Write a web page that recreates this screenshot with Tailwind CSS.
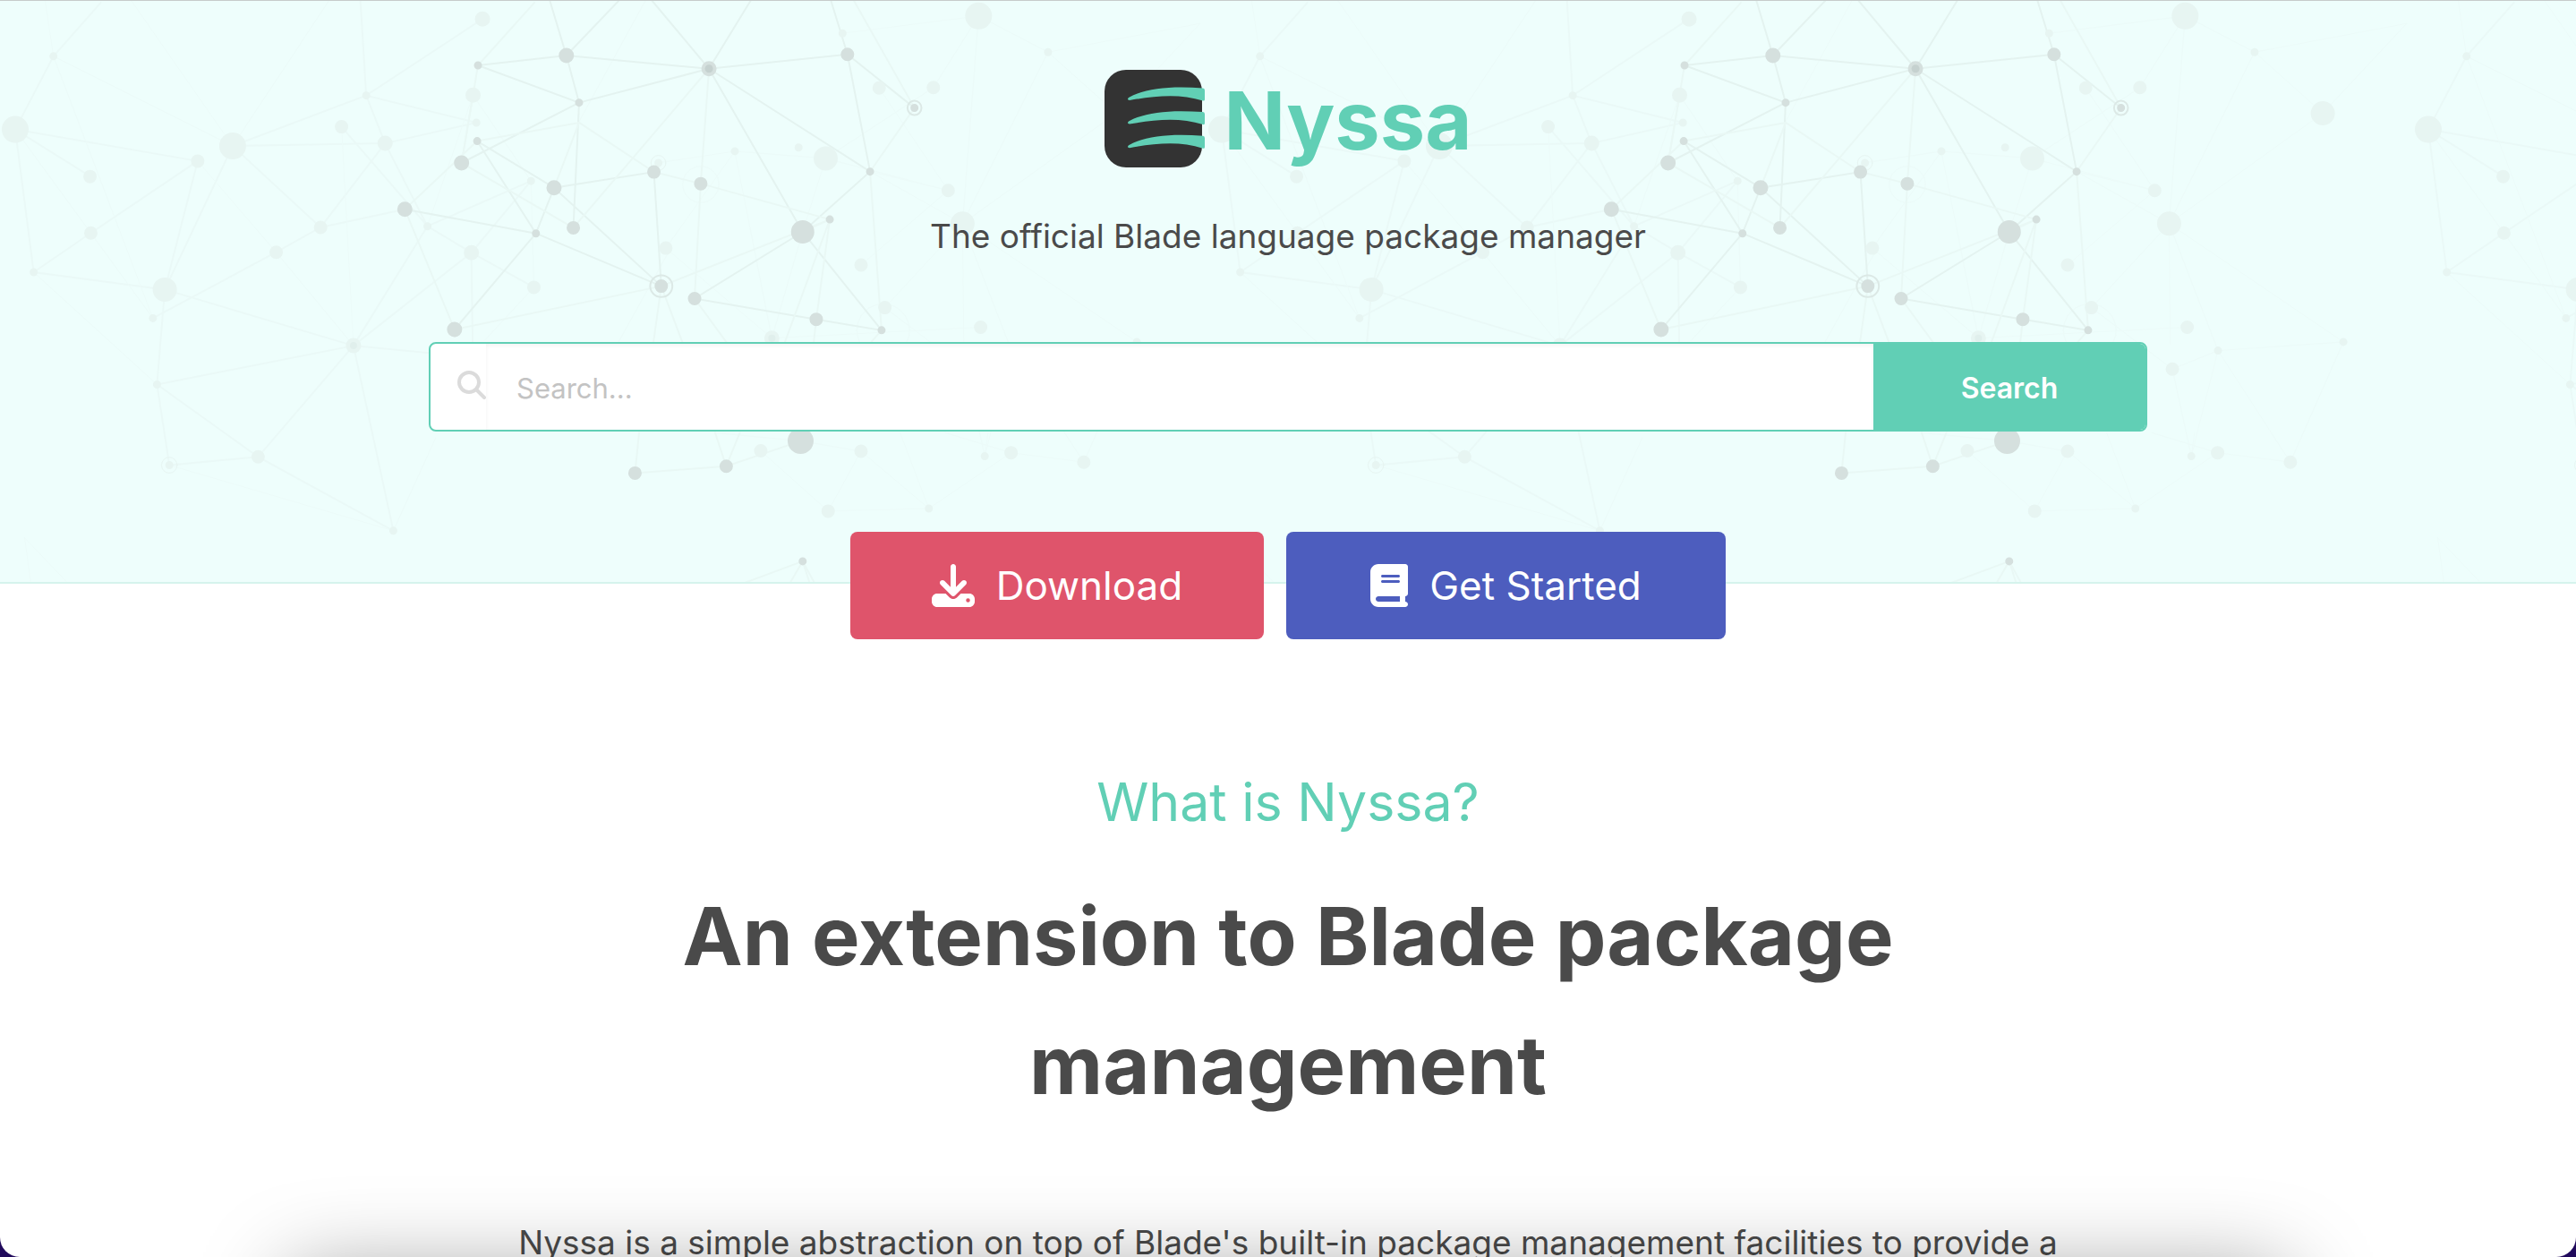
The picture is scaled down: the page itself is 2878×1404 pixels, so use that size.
<!DOCTYPE html>
<html lang="en">
<head>
<meta charset="utf-8">
<meta name="viewport" content="width=device-width, initial-scale=1">
<title>Nyssa - The official Blade language package manager</title>
<script src="https://cdn.jsdelivr.net/npm/@tailwindcss/browser@4"></script>
</head>
<body class="bg-white font-[Inter,sans-serif] text-[#4a4a4a]">
<div class="relative h-screen overflow-hidden">
  <header class="relative border-t border-b-2 border-t-[#c6cccb] border-b-[#d5f3ed] bg-[#eefefc]">
    <svg class="absolute inset-0 size-full" aria-hidden="true">
      <defs>
        <g id="net" transform="scale(.45918 .4209)" fill="none" stroke-linecap="round">
          <!-- faint links -->
          <g stroke="#eaf9f7" stroke-width="2">
            <path vector-effect="non-scaling-stroke" d="M245 5L130 147L37 341L220 466M37 341L481 425M37 341L82 720L401 766L860 915M82 720L221 616L481 425L401 766L382 1018L860 915M566 385L891 251L1174 48M566 385L937 378L1159 323L891 251L877 0M891 251L937 378L780 601L566 385L401 766M937 378L1040 598L1147 668L1299 760M831 334L1040 598L860 915L1147 668L1292 478L1040 598M860 915L628 1210L382 1018L412 1232L628 1210L957 1406L860 915L1100 940M1151 250L1123 430M672 667L780 601L985 553M672 667L372 842M1147 668L1150 905"/>
          </g>
          <g stroke="#ecfbf9" stroke-width="1">
            <path vector-effect="non-scaling-stroke" d="M110 0L130 147L372 842L221 616L37 341M130 147L566 385L800 0M320 0L566 385M82 720L382 1018M831 334L860 915L672 667L481 425M412 1232L957 1406L1060 1160M60 1425L165 1545M60 1425L75 1545M1151 250L1292 478L1299 760L1180 900M1040 598L1151 250M1409 320L1570 0M1505 905L1630 660M2050 86L2381 40L2550 136L2716 298L2920 60L2550 136L2342 591L2716 298M2381 40L2271 230L2009 418M2381 40L2342 591L2153 814L2350 977L2461 928L2342 591L2766 905L2461 928L2637 1224L2766 905M2350 977L2396 1208L2461 928M2139 231L2307 503L2117 453L2342 591M1788 399L2009 418L2307 503M1788 399L1620 656L1878 895L1788 399L1600 430M2009 418L1953 613L1878 895L2386 866M2095 701L2307 503M1851 1194L2015 1354L2095 1195L2260 1347L2015 1354M2095 1195L1948 1168L1740 1146M2260 1347L2460 1199L2300 1146M2260 1347L2190 1146M2396 1208L2404 1146M2460 1199L2637 1224L2590 1146M2342 591L2345 910"/>
            <ellipse vector-effect="non-scaling-stroke" cx="1705" cy="487" rx="44" ry="48"/>
            <ellipse vector-effect="non-scaling-stroke" cx="2149" cy="874" rx="64" ry="70"/>
          </g>
          <!-- strong links -->
          <g stroke="#e4f3f0" stroke-width="2">
            <path vector-effect="non-scaling-stroke" d="M1338 0L1378 145L1505 0M1163 171L1378 145L1725 180L2062 142L2225 284M1163 171L1409 270L1378 145M1409 270L1725 180L1587 0M1409 270L1123 430M1409 270L1395 602M1161 372L1348 496L1304 617L1161 372M985 553L1304 617L1609 757L1348 496L1591 454L1609 757M1304 617L1106 872M1725 180L1826 0M1725 180L1953 613L2117 453L1725 180M2117 453L2062 142L2022 0M1953 613L2145 874L1986 845L1690 790L1953 613"/>
          </g>
          <g stroke="#e9f8f5" stroke-width="2">
            <path vector-effect="non-scaling-stroke" d="M1163 171L1300 5M1161 372L985 553L1106 872M1163 171L1123 430L1395 602L1725 180L1705 485L1690 790L1767 905M1161 372L1409 323L1348 496M1409 323L1591 454L1705 485L2019 580L1609 757L1106 872M2078 0L2225 284L2117 453L2145 874L2120 905M2019 580L1953 613M2019 580L1986 845L1980 905M2019 580L1910 905M1609 757L1590 905M1609 757L1660 905M1545 1253L1767 1235L1948 1168M1555 1146L1545 1253M1740 1146L1767 1235L1800 1146M1953 1487L1810 1545M1953 1487L1922 1545M1953 1487L1970 1545M1953 1487L1982 1545"/>
          </g>
          <!-- faint nodes, grouped by size -->
          <g stroke="#e7f5f2">
            <path vector-effect="non-scaling-stroke" stroke-width="30" d="M37 341h0M566 385h0M2381 40h0"/>
            <path vector-effect="non-scaling-stroke" stroke-width="27" d="M401 766h0M2009 418h0M2342 591h0M2716 298h0"/>
            <path vector-effect="non-scaling-stroke" stroke-width="17" d="M1174 48h0M1151 250h0M937 378h0M1147 668h0M860 915h0M1878 895h0"/>
            <path vector-effect="non-scaling-stroke" stroke-width="15" d="M219 466h0M481 425h0M221 616h0M780 601h0M672 667h0M831 334h0M628 1210h0M1299 760h0M2271 230h0M2139 231h0M2307 503h0M1620 656h0M2095 701h0M2153 814h0M2386 866h0M1851 1194h0M2095 1195h0M2460 1199h0M2637 1224h0M2015 1354h0M2350 977h0"/>
            <path vector-effect="non-scaling-stroke" stroke-width="9" d="M130 147h0M891 251h0M1159 323h0M1292 478h0M1040 598h0M82 720h0M372 842h0M382 1018h0M957 1406h0M2050 86h0M2550 136h0M1788 399h0M1943 389h0M2396 1208h0M2260 1347h0M2766 905h0M2461 928h0M412 1232h0M1602 430h0"/>
            <ellipse vector-effect="non-scaling-stroke" cx="412" cy="1232" rx="19" ry="21"/>
            <ellipse vector-effect="non-scaling-stroke" cx="1602" cy="430" rx="18" ry="20"/>
            <path vector-effect="non-scaling-stroke" stroke="#e0efec" stroke-width="8" d="M860 915h0M1878 895h0"/>
          </g>
          <!-- strong nodes -->
          <g stroke="#d5e0de">
            <path vector-effect="non-scaling-stroke" stroke-width="29" d="M1948 1168h0"/>
            <path vector-effect="non-scaling-stroke" stroke-width="26" d="M1953 613h0"/>
            <path vector-effect="non-scaling-stroke" stroke-width="17" d="M1378 145h0M1123 430h0M985 553h0M1348 496h0M1106 872h0M1725 180h0"/>
            <path vector-effect="non-scaling-stroke" stroke-width="15" d="M1395 602h0M1545 1253h0M2062 142h0M1591 454h0M1705 485h0M1609 757h0M1690 790h0M1986 845h0M1767 1235h0"/>
            <path vector-effect="non-scaling-stroke" stroke-width="9" d="M1163 171h0M1409 270h0M1161 372h0M1304 617h0M2117 453h0M2019 580h0M2145 874h0M1953 1487h0M2225 284h0"/>
            <ellipse vector-effect="non-scaling-stroke" stroke="#dce9e6" stroke-width="2" cx="2225" cy="284" rx="17" ry="19"/>
            <ellipse vector-effect="non-scaling-stroke" stroke="#dce9e6" stroke-width="2" cx="1609" cy="757" rx="27" ry="29"/>
            <path vector-effect="non-scaling-stroke" stroke="#c5d1cf" stroke-width="9" d="M1725 180h0"/>
          </g>
        </g>
      </defs>
      <use href="#net"/>
      <use href="#net" x="1348"/>
      <use href="#net" x="2696"/>
    </svg>

    <div class="relative mx-auto flex w-full max-w-[1920px] flex-col items-center pt-[75px]">
      <a href="#" class="flex items-center gap-5 text-[90px] leading-[110px] font-bold text-[#61cfb5]">
        <svg class="h-[110px] w-[114px]" viewBox="0 0 114 110" aria-hidden="true">
          <rect width="109" height="109" rx="24" fill="#333"/>
          <g fill="#61cfb5">
            <path id="blade" d="M27 31C46 20 76 18 110 20.500Q112 20.600 112 23V33Q112 35 110 34.500C84 26 56 29 28 34Q24.500 33.500 27 31Z"/>
            <use href="#blade" y="26.600"/>
            <use href="#blade" y="53.200"/>
          </g>
        </svg>
        <span class="pt-1">Nyssa</span>
      </a>
      <p class="mt-11 text-[37px] leading-[60px]">The official Blade language package manager</p>

      <form class="mt-[88px] flex h-[100px] w-full overflow-hidden rounded-lg border-2 border-[#61cfb5] bg-white" onsubmit="return false">
        <label for="q" aria-label="Search packages" class="flex items-center pb-1 pl-[30px] text-[#dbdbdb]">
          <svg class="size-8" viewBox="0 0 32 32" fill="none" stroke="currentColor" stroke-width="4" aria-hidden="true"><circle cx="13" cy="13" r="11"/><path d="M21 21l9 9" stroke-linecap="round"/></svg>
        </label>
        <input id="q" type="text" placeholder="Search..." class="min-w-0 flex-1 pt-1 pl-[34px] text-[31px] shadow-[inset_0_2px_4px_rgba(10,10,10,0.05)] outline-none placeholder:text-[#c3c3c3]">
        <button type="submit" class="w-[304px] bg-[#61cfb5] pt-1 text-[32px] font-semibold text-white">Search</button>
      </form>

      <div class="mt-28 -mb-16 flex gap-[25px] text-[44px] text-white">
        <a href="#" class="flex h-[120px] w-[462px] items-center justify-center gap-6 rounded-lg bg-[#df546b]">
          <svg class="size-12" viewBox="0 0 512 512" fill="currentColor" aria-hidden="true"><path d="M288 32c0-17.700-14.300-32-32-32s-32 14.300-32 32V274.700l-73.400-73.400c-12.500-12.500-32.800-12.500-45.300 0s-12.500 32.800 0 45.300l128 128c12.500 12.500 32.800 12.500 45.300 0l128-128c12.500-12.500 12.500-32.800 0-45.300s-32.800-12.500-45.300 0L288 274.700V32zM64 352c-35.300 0-64 28.700-64 64v32c0 35.300 28.700 64 64 64H448c35.300 0 64-28.700 64-64V416c0-35.300-28.700-64-64-64H346.500l-45.300 45.300c-25 25-65.500 25-90.500 0L165.500 352H64zm368 56a24 24 0 1 1 0 48 24 24 0 1 1 0-48z"/></svg>
          Download
        </a>
        <a href="#" class="flex h-[120px] w-[491px] items-center justify-center gap-6 rounded-lg bg-[#4d5dbe]">
          <svg class="h-12 w-[42px]" viewBox="0 0 448 512" fill="currentColor" aria-hidden="true"><path d="M96 0C43 0 0 43 0 96V416c0 53 43 96 96 96H384h32c17.700 0 32-14.300 32-32s-14.300-32-32-32V384c17.700 0 32-14.300 32-32V32c0-17.700-14.300-32-32-32H384 96zm0 384H352v64H96c-17.700 0-32-14.300-32-32s14.300-32 32-32zm32-240c0-8.800 7.200-16 16-16H336c8.800 0 16 7.200 16 16s-7.200 16-16 16H144c-8.800 0-16-7.200-16-16zm16 48H336c8.800 0 16 7.200 16 16s-7.200 16-16 16H144c-8.800 0-16-7.200-16-16s7.200-16 16-16z"/></svg>
          Get Started
        </a>
      </div>
    </div>
  </header>

  <main class="mx-auto w-3/5 pt-[198px] text-center">
    <p class="text-[59px] leading-[92px] text-[#61cfb5]">What is Nyssa?</p>
    <h1 class="mx-auto mt-8 max-w-[1536px] text-[90px] leading-[144px] font-bold">An extension to Blade package management</h1>
    <p class="mt-24 text-[37px] leading-[60px]">Nyssa is a simple abstraction on top of Blade's built-in package management facilities to provide a</p>
  </main>

  <!-- soft shadow cast from below the window's lower edge, and its rounded corners -->
  <div class="pointer-events-none absolute inset-x-[324px] top-full h-40 shadow-[0_20px_100px_rgba(0,0,0,0.4)]"></div>
  <div class="pointer-events-none absolute inset-0 rounded-b-[22px] shadow-[0_0_0_40px_#210a5c]"></div>
</div>
</body>
</html>
